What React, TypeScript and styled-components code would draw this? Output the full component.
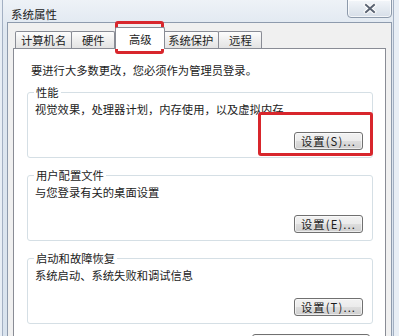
import React from 'react';
import styled, { createGlobalStyle } from 'styled-components';

const GlobalStyle = createGlobalStyle`
  html, body {
    margin: 0;
    padding: 0;
  }
  body {
    background: #e8eef5;
    font-family: "Noto Sans CJK SC", "Noto Sans", sans-serif;
    color: #1c1c1c;
    overflow: hidden;
  }
`;

const Window = styled.div`
  display: flex;
  flex-direction: column;
  box-sizing: border-box;
  width: 392px;
  height: 336px;
  margin-left: 2px;
  padding: 0 1px 0 4px;
  border-left: 1px solid #a3b0c3;
  border-right: 1px solid #a3b0c3;
  background: linear-gradient(180deg, #eef2f7 0%, #dfe7f0 30px, #d9e3ee 100%);
  overflow: hidden;
`;

const TitleBar = styled.div`
  display: flex;
  justify-content: space-between;
  align-items: flex-start;
  height: 26px;
  padding-left: 4px;
`;

const Title = styled.div`
  margin-top: 6px;
  font-size: 11.5px;
  line-height: 16px;
  color: #1a1a1a;
`;

const CloseButton = styled.div`
  display: flex;
  align-items: center;
  justify-content: center;
  box-sizing: border-box;
  width: 45px;
  height: 19px;
  margin-top: -1px;
  border: 1px solid #8d9aab;
  border-radius: 0 0 4px 4px;
  background: linear-gradient(180deg, #f3f6fa 0%, #e3e9f0 55%, #d6dee8 100%);
  box-shadow: inset 0 0 0 1px rgba(255, 255, 255, 0.7);
`;

const Client = styled.div`
  display: flex;
  flex-direction: column;
  flex: 1;
  padding: 4px 5px 0 5px;
  border: 1px solid #8e9bad;
  border-bottom: none;
  background: #f0f0f0;
`;

const TabStrip = styled.div`
  display: flex;
  align-items: flex-end;
  height: 22px;
  padding-left: 2px;
  margin-bottom: -1px;
  position: relative;
  z-index: 1;
`;

const Tab = styled.div<{ $active?: boolean }>`
  display: flex;
  align-items: center;
  justify-content: center;
  box-sizing: border-box;
  min-width: ${(p) => (p.$active ? 50 : 44)}px;
  height: ${(p) => (p.$active ? 22 : 17)}px;
  margin: ${(p) => (p.$active ? '0 -2px' : '0 0 1px -1px')};
  padding: 0 5px;
  border: 1px solid #898c95;
  border-bottom: none;
  border-radius: 2px 2px 0 0;
  background: ${(p) =>
    p.$active ? '#ffffff' : 'linear-gradient(180deg, #fdfdfd 0%, #f0f0f0 45%, #e3e3e3 100%)'};
  font-size: 11.3px;
  line-height: 14px;
  white-space: nowrap;
  position: relative;
  z-index: ${(p) => (p.$active ? 2 : 1)};

  &:first-child {
    margin-left: 0;
  }
`;

const MarkWrap = styled.div`
  display: flex;
  position: relative;
  z-index: 3;
`;

const RedMark = styled.div<{ $inset: string }>`
  position: absolute;
  inset: ${(p) => p.$inset};
  border: 3px solid #d8262c;
  border-radius: 3px;
  pointer-events: none;
`;

const Page = styled.div`
  display: flex;
  flex-direction: column;
  flex: 1;
  padding: 0 12px 0 13px;
  border: 1px solid #898c95;
  background: #ffffff;
`;

const Intro = styled.div`
  margin: 14px 0 8px 4px;
  font-size: 11.3px;
  line-height: 14px;
`;

const Group = styled.fieldset`
  margin: 0;
  padding: 0 9px 7px 6px;
  min-width: 0;
  border: 1px solid #d5dfe5;
  border-radius: 3px;

  & + & {
    margin-top: 10px;
  }
`;

const Legend = styled.legend`
  padding: 0 2px;
  font-size: 11.3px;
  line-height: 14px;
`;

const GroupText = styled.div`
  margin: 3px 0 0 1px;
  font-size: 11.3px;
  line-height: 14px;
`;

const ButtonRow = styled.div<{ $gap: number }>`
  display: flex;
  justify-content: flex-end;
  margin-top: ${(p) => p.$gap}px;
`;

const Button = styled.button<{ $width: number }>`
  box-sizing: border-box;
  width: ${(p) => p.$width}px;
  height: 18px;
  padding: 0;
  border: 1px solid #707070;
  border-radius: 3px;
  background: linear-gradient(180deg, #f2f2f2 0%, #ebebeb 50%, #dddddd 51%, #cfcfcf 100%);
  box-shadow: inset 0 0 0 1px rgba(255, 255, 255, 0.6);
  font-family: "Noto Sans CJK SC", "Noto Sans", sans-serif;
  font-size: 11.3px;
  line-height: 14px;
  letter-spacing: 1.1px;
  color: #1c1c1c;
`;

const BottomRow = styled.div`
  display: flex;
  justify-content: flex-end;
  margin: 10px 3px 0 0;
`;

function CloseIcon() {
  return (
    <svg width="14" height="11" viewBox="0 0 14 11">
      <path d="M3 2 L11 9 M11 2 L3 9" stroke="#ffffff" strokeWidth="4" strokeLinecap="square" />
      <path d="M3 2 L11 9 M11 2 L3 9" stroke="#5b6473" strokeWidth="2" strokeLinecap="square" />
    </svg>
  );
}

const groups = [
  { title: '性能', text: '视觉效果，处理器计划，内存使用，以及虚拟内存', key: 'S', marked: true },
  { title: '用户配置文件', text: '与您登录有关的桌面设置', key: 'E', marked: false },
  { title: '启动和故障恢复', text: '系统启动、系统失败和调试信息', key: 'T', marked: false },
];

export default function App() {
  return (
    <>
      <GlobalStyle />
      <Window>
        <TitleBar>
          <Title>系统属性</Title>
          <CloseButton>
            <CloseIcon />
          </CloseButton>
        </TitleBar>
        <Client>
          <TabStrip>
            <Tab>计算机名</Tab>
            <Tab>硬件</Tab>
            <MarkWrap>
              <Tab $active>高级</Tab>
              <RedMark $inset="-6px -1px -5px 0" />
            </MarkWrap>
            <Tab>系统保护</Tab>
            <Tab>远程</Tab>
          </TabStrip>
          <Page>
            <Intro>要进行大多数更改，您必须作为管理员登录。</Intro>
            {groups.map((g) => (
              <Group key={g.key}>
                <Legend>{g.title}</Legend>
                <GroupText>{g.text}</GroupText>
                <ButtonRow $gap={16}>
                  {g.marked ? (
                    <MarkWrap>
                      <Button $width={69}>设置({g.key})...</Button>
                      <RedMark $inset="-20px -10px -6px -36px" />
                    </MarkWrap>
                  ) : (
                    <Button $width={69}>设置({g.key})...</Button>
                  )}
                </ButtonRow>
              </Group>
            ))}
            {/* next button sits below the visible edge; only its top shows */}
            <BottomRow>
              <Button $width={118} aria-label="环境变量" />
            </BottomRow>
          </Page>
        </Client>
      </Window>
    </>
  );
}
